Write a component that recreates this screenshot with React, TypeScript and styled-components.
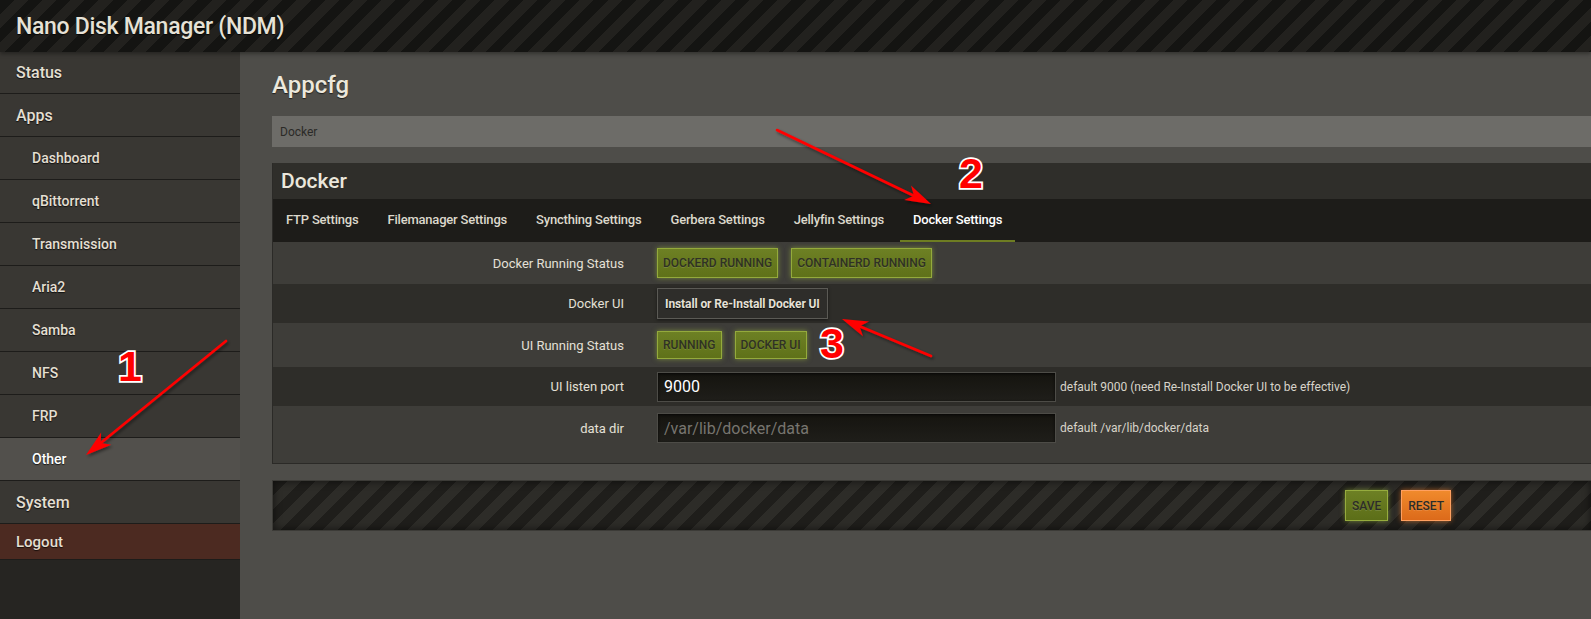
import React from "react";
import styled, { createGlobalStyle, css } from "styled-components";

const GlobalStyle = createGlobalStyle`
  html, body { margin: 0; padding: 0; }
  body {
    background: #4e4d49;
    font-family: Roboto, "Noto Sans", "Liberation Sans", sans-serif;
    color: #e2ded3;
    overflow: hidden;
  }
  * { box-sizing: border-box; }
`;

const Page = styled.div`
  position: relative;
  width: 1591px;
  height: 619px;
  display: flex;
  flex-direction: column;
  overflow: hidden;
`;

const Header = styled.header`
  height: 52px;
  flex: none;
  display: flex;
  align-items: center;
  padding-left: 16px;
  background: repeating-linear-gradient(135deg, #141412 0 10px, #22211e 10px 20px);
  box-shadow: 0 2px 4px rgba(0, 0, 0, 0.35);
  position: relative;
  z-index: 1;
`;

const Brand = styled.h1`
  margin: 0;
  font-size: 23px;
  font-weight: 500;
  color: #e6e2d6;
  letter-spacing: -0.3px;
  text-shadow: 0 1px 1px rgba(0, 0, 0, 0.8);
`;

const Body = styled.div`
  flex: 1;
  display: flex;
  min-height: 0;
`;

const Sidebar = styled.nav`
  width: 240px;
  flex: none;
  background: #262522;
  display: flex;
  flex-direction: column;
`;

const NavItem = styled.div<{ $level: "top" | "sub"; $active?: boolean; $logout?: boolean; $first?: boolean }>`
  height: ${(p) => (p.$first ? 42 : 43)}px;
  flex: none;
  display: flex;
  align-items: center;
  border-bottom: 1px solid #1d1c1a;
  background: #393733;
  color: #e4dfd2;
  font-weight: 500;
  text-shadow: 0 1px 1px rgba(0, 0, 0, 0.7);
  ${(p) =>
    p.$level === "top"
      ? css`
          padding-left: 16px;
          font-size: 16px;
        `
      : css`
          padding-left: 32px;
          font-size: 14px;
        `}
  ${(p) =>
    p.$active &&
    css`
      background: #52504c;
      color: #ffffff;
    `}
  ${(p) =>
    p.$logout &&
    css`
      height: 36px;
      font-size: 15px;
      background: #4c2a21;
    `}
`;

const Main = styled.main`
  flex: 1;
  min-width: 0;
  padding: 17px 0 0 32px;
  background: #4e4d49;
  display: flex;
  flex-direction: column;
`;

const PageTitle = styled.h2`
  margin: 0;
  font-size: 24px;
  line-height: 32px;
  font-weight: 500;
  color: #ece8dc;
  text-shadow: 0 1px 1px rgba(0, 0, 0, 0.6);
`;

const Breadcrumb = styled.div`
  margin-top: 15px;
  height: 31px;
  display: flex;
  align-items: center;
  padding-left: 8px;
  background: #6d6c68;
  color: #2b2a27;
  font-size: 12px;
`;

const Panel = styled.section`
  margin-top: 16px;
  border-left: 1px solid #2b2a27;
  border-bottom: 1px solid #2b2a27;
  background: #3e3d39;
`;

const PanelHeader = styled.h3`
  margin: 0;
  height: 36px;
  display: flex;
  align-items: center;
  padding-left: 8px;
  background: #2f2e2a;
  font-size: 21px;
  font-weight: 500;
  color: #ebe7dc;
`;

const TabBar = styled.div`
  height: 43px;
  display: flex;
  gap: 3px;
  background: #1d1c19;
`;

const Tab = styled.div<{ $active?: boolean }>`
  display: flex;
  align-items: center;
  padding: 0 13px;
  font-size: 13px;
  font-weight: 500;
  letter-spacing: -0.2px;
  color: #dcd8cc;
  border-bottom: 2px solid transparent;
  ${(p) =>
    p.$active &&
    css`
      color: #ffffff;
      border-bottom-color: #6e7d22;
    `}
`;

const FormBody = styled.div`
  padding-bottom: 13px;
`;

const Row = styled.div<{ $h: number; $dark?: boolean }>`
  height: ${(p) => p.$h}px;
  display: grid;
  grid-template-columns: 351px auto auto;
  justify-content: start;
  align-items: center;
  column-gap: 33px;
  background: ${(p) => (p.$dark ? "#2e2d29" : "#3e3d39")};
`;

const Label = styled.div`
  text-align: right;
  font-size: 13px;
  font-weight: 400;
  color: #e4e0d6;
`;

const Controls = styled.div`
  display: flex;
  align-items: center;
  gap: 13px;
`;

const StatusBadge = styled.span<{ $h?: number }>`
  height: ${(p) => p.$h ?? 30}px;
  padding: 0 5px;
  display: inline-flex;
  align-items: center;
  background: linear-gradient(#6d8024, #5f7119);
  border: 1px solid #94aa3c;
  box-shadow: 0 0 5px rgba(170, 200, 60, 0.55);
  color: #2f3124;
  font-size: 12px;
  font-weight: 500;
  text-shadow: 0 1px 0 rgba(255, 255, 255, 0.12);
`;

const DarkButton = styled.button`
  height: 31px;
  padding: 0 7px;
  background: #2e2d2a;
  border: 1px solid #5b5a55;
  box-shadow: 0 1px 3px rgba(0, 0, 0, 0.5);
  color: #e4e0d6;
  font-family: inherit;
  font-size: 12px;
  font-weight: 700;
  letter-spacing: -0.1px;
  text-shadow: 0 1px 1px rgba(0, 0, 0, 0.8);
`;

const TextInput = styled.input`
  width: 399px;
  height: 30px;
  padding: 0 6px;
  background: linear-gradient(#15140f, #1f1e1a);
  border: 1px solid #4d4c47;
  box-shadow: inset 0 1px 3px rgba(0, 0, 0, 0.7);
  color: #ffffff;
  font-family: inherit;
  font-size: 16px;
  outline: none;
  &::placeholder {
    color: #77756f;
  }
`;

const Help = styled.span`
  margin-left: -29px;
  font-size: 12px;
  color: #d8d4ca;
`;

const ActionBar = styled.div`
  margin-top: 16px;
  height: 51px;
  display: flex;
  align-items: center;
  justify-content: flex-end;
  gap: 13px;
  padding-right: 140px;
  border: 1px solid #3c3b37;
  border-right: none;
  background: repeating-linear-gradient(135deg, #1f1e1b 0 10px, #2d2c28 10px 20px);
  box-shadow: inset 0 0 8px rgba(0, 0, 0, 0.6);
`;

const ActionButton = styled.button<{ $variant: "save" | "reset" }>`
  height: 31px;
  padding: 0 6px;
  font-family: inherit;
  font-size: 12px;
  font-weight: 500;
  color: #2c2c28;
  text-shadow: 0 1px 0 rgba(255, 255, 255, 0.15);
  ${(p) =>
    p.$variant === "save"
      ? css`
          background: linear-gradient(#6d8024, #5c6e18);
          border: 1px solid #96ac3e;
          box-shadow: 0 0 5px rgba(170, 200, 60, 0.55);
        `
      : css`
          background: linear-gradient(#f08a2c, #dc6a1a);
          border: 1px solid #ffa060;
          box-shadow: 0 0 5px rgba(255, 130, 40, 0.6);
        `}
`;

const Overlay = styled.svg`
  position: absolute;
  inset: 0;
  width: 1591px;
  height: 619px;
  pointer-events: none;
  z-index: 5;
`;

type ArrowProps = { x1: number; y1: number; x2: number; y2: number };

function Arrow({ x1, y1, x2, y2 }: ArrowProps) {
  const dx = x2 - x1;
  const dy = y2 - y1;
  const len = Math.hypot(dx, dy);
  const ux = dx / len;
  const uy = dy / len;
  const head = 26;
  const w = 8;
  const bx = x2 - ux * head;
  const by = y2 - uy * head;
  const px = -uy;
  const py = ux;
  const nx = bx + ux * 7;
  const ny = by + uy * 7;
  const pts = [
    `${x2},${y2}`,
    `${bx + px * w},${by + py * w}`,
    `${nx},${ny}`,
    `${bx - px * w},${by - py * w}`,
  ].join(" ");
  return (
    <g filter="url(#shadow)">
      <line x1={x1} y1={y1} x2={nx} y2={ny} stroke="#ff0000" strokeWidth={2.6} strokeLinecap="round" />
      <polygon points={pts} fill="#ff0000" />
    </g>
  );
}

const Num = styled.text`
  font-family: "Liberation Sans", Arial, sans-serif;
  font-weight: 700;
  font-size: 43px;
  fill: #ff0000;
  stroke: #ffffff;
  stroke-width: 3.5px;
  paint-order: stroke;
  text-anchor: middle;
`;

const subItems = ["Dashboard", "qBittorrent", "Transmission", "Aria2", "Samba", "NFS", "FRP"];
const tabs = [
  "FTP Settings",
  "Filemanager Settings",
  "Syncthing Settings",
  "Gerbera Settings",
  "Jellyfin Settings",
  "Docker Settings",
];

export default function App() {
  return (
    <>
      <GlobalStyle />
      <Page>
        <Header>
          <Brand>Nano Disk Manager (NDM)</Brand>
        </Header>
        <Body>
          <Sidebar>
            <NavItem $level="top" $first>
              Status
            </NavItem>
            <NavItem $level="top">Apps</NavItem>
            {subItems.map((s) => (
              <NavItem key={s} $level="sub">
                {s}
              </NavItem>
            ))}
            <NavItem $level="sub" $active>
              Other
            </NavItem>
            <NavItem $level="top">System</NavItem>
            <NavItem $level="top" $logout>
              Logout
            </NavItem>
          </Sidebar>
          <Main>
            <PageTitle>Appcfg</PageTitle>
            <Breadcrumb>Docker</Breadcrumb>
            <Panel>
              <PanelHeader>Docker</PanelHeader>
              <TabBar>
                {tabs.map((t) => (
                  <Tab key={t} $active={t === "Docker Settings"}>
                    {t}
                  </Tab>
                ))}
              </TabBar>
              <FormBody>
                <Row $h={42}>
                  <Label>Docker Running Status</Label>
                  <Controls>
                    <StatusBadge>DOCKERD RUNNING</StatusBadge>
                    <StatusBadge>CONTAINERD RUNNING</StatusBadge>
                  </Controls>
                </Row>
                <Row $h={39} $dark>
                  <Label>Docker UI</Label>
                  <Controls>
                    <DarkButton>Install or Re-Install Docker UI</DarkButton>
                  </Controls>
                </Row>
                <Row $h={44}>
                  <Label>UI Running Status</Label>
                  <Controls>
                    <StatusBadge $h={28}>RUNNING</StatusBadge>
                    <StatusBadge $h={28}>DOCKER UI</StatusBadge>
                  </Controls>
                </Row>
                <Row $h={39} $dark>
                  <Label>UI listen port</Label>
                  <TextInput defaultValue="9000" />
                  <Help>default 9000 (need Re-Install Docker UI to be effective)</Help>
                </Row>
                <Row $h={44}>
                  <Label>data dir</Label>
                  <TextInput placeholder="/var/lib/docker/data" />
                  <Help>default /var/lib/docker/data</Help>
                </Row>
              </FormBody>
            </Panel>
            <ActionBar>
              <ActionButton $variant="save">SAVE</ActionButton>
              <ActionButton $variant="reset">RESET</ActionButton>
            </ActionBar>
          </Main>
        </Body>
        <Overlay viewBox="0 0 1591 619">
          <defs>
            <filter id="shadow" x="-20%" y="-20%" width="140%" height="140%">
              <feDropShadow dx="1.5" dy="2" stdDeviation="1.5" floodColor="#000" floodOpacity="0.45" />
            </filter>
          </defs>
          <Arrow x1={226} y1={341} x2={86} y2={455} />
          <Arrow x1={777} y1={130} x2={931} y2={204} />
          <Arrow x1={931} y1={356} x2={842} y2={319} />
          <Num x={130} y={381}>1</Num>
          <Num x={971} y={188}>2</Num>
          <Num x={832} y={358}>3</Num>
        </Overlay>
      </Page>
    </>
  );
}
